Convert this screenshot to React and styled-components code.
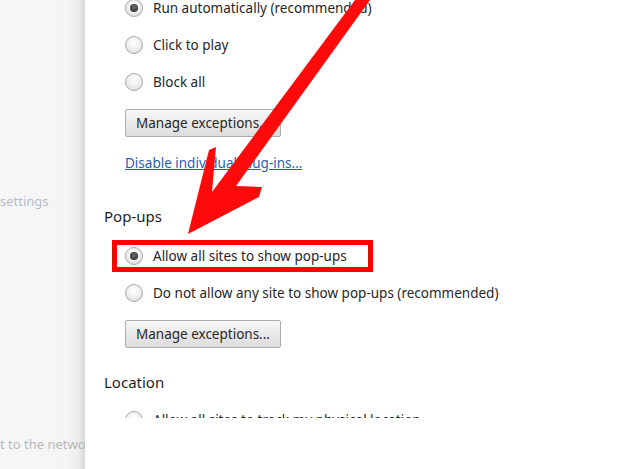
import React from "react";
import styled, { createGlobalStyle } from "styled-components";

const Global = createGlobalStyle`
  html, body { margin: 0; padding: 0; background: #ffffff; }
  body { font-family: "Noto Sans", "Open Sans", sans-serif; }
`;

const Page = styled.div`
  position: relative;
  width: 637px;
  height: 469px;
  display: flex;
  overflow: hidden;
  background: #fff;
`;

const Sidebar = styled.aside`
  width: 85px;
  flex: none;
  overflow: hidden;
  background: linear-gradient(to right, #f7f7f7 0px, #f5f5f5 68px, #ececec 78px, #dcdcdc 84px, #d4d4d4 85px);
  display: flex;
  flex-direction: column;
  padding-top: 192px;
  box-sizing: border-box;
`;

const SideItem = styled.div`
  white-space: nowrap;
  font-size: 13px;
  line-height: 18px;
  color: ${(p) => p.$color};
  margin-top: ${(p) => p.$mt}px;
  opacity: 0.9;
`;

const Main = styled.main`
  flex: 1;
  background: #fff;
`;

const Clip = styled.div`
  height: 418px;
  overflow: hidden;
  padding-left: 19px;
  display: flex;
  flex-direction: column;
`;

const Section = styled.section`
  display: flex;
  flex-direction: column;
  margin-top: ${(p) => p.$mt}px;
`;

const Heading = styled.h3`
  margin: 0 0 ${(p) => p.$mb}px 0;
  font-weight: 400;
  font-size: 15px;
  line-height: 20px;
  height: 20px;
  color: #1e1e1e;
`;

const Options = styled.div`
  display: flex;
  flex-direction: column;
  align-items: flex-start;
  gap: 17px;
  padding-left: 21px;
`;

const Row = styled.label`
  display: flex;
  align-items: center;
  gap: 10px;
  height: 20px;
  font-size: 13.5px;
  color: #262626;
  white-space: nowrap;
`;

const Radio = styled.span`
  width: 16px;
  height: 16px;
  flex: none;
  border-radius: 50%;
  border: 1px solid #a9a9a9;
  background: radial-gradient(circle at 50% 35%, #ffffff 0%, #f0f0f0 45%, #d6d6d6 100%);
  display: flex;
  align-items: center;
  justify-content: center;
  &::after {
    content: "";
    display: ${(p) => (p.$checked ? "block" : "none")};
    width: 8px;
    height: 8px;
    border-radius: 50%;
    background: radial-gradient(circle at 50% 40%, #6a6a6a 0%, #3a3a3a 70%, #2a2a2a 100%);
  }
`;

const Button = styled.button`
  width: 156px;
  height: 28px;
  border: 1px solid #acacac;
  border-radius: 2px;
  background: linear-gradient(#f8f8f8, #e9e9e9 50%, #dddddd);
  font-family: inherit;
  font-size: 13.5px;
  color: #262626;
  padding: 0;
`;

const Link = styled.a`
  font-size: 13.5px;
  line-height: 18px;
  color: #2a5db8;
  text-decoration: underline;
  white-space: nowrap;
`;

const Highlight = styled.div`
  position: absolute;
  left: 112px;
  top: 240px;
  width: 261px;
  height: 32px;
  box-sizing: border-box;
  border: 5px solid #ff0000;
  pointer-events: none;
`;

const Arrow = styled.svg`
  position: absolute;
  left: 0;
  top: 0;
  pointer-events: none;
`;

export default function App() {
  return (
    <>
      <Global />
      <Page>
        <Sidebar>
          <SideItem $color="#aeb7c6" $mt={0}>settings</SideItem>
          <SideItem $color="#b3b3b3" $mt={225}>t to the network</SideItem>
        </Sidebar>
        <Main>
          <Clip>
            <Section $mt={-2}>
              <Options>
                <Row><Radio $checked />Run automatically (recommended)</Row>
                <Row><Radio />Click to play</Row>
                <Row><Radio />Block all</Row>
                <Button>Manage exceptions...</Button>
                <Link>Disable individual plug-ins...</Link>
              </Options>
            </Section>
            <Section $mt={34}>
              <Heading $mb={20}>Pop-ups</Heading>
              <Options>
                <Row><Radio $checked />Allow all sites to show pop-ups</Row>
                <Row><Radio />Do not allow any site to show pop-ups (recommended)</Row>
                <Button>Manage exceptions...</Button>
              </Options>
            </Section>
            <Section $mt={24}>
              <Heading $mb={18}>Location</Heading>
              <Options>
                <Row><Radio />Allow all sites to track my physical location</Row>
              </Options>
            </Section>
          </Clip>
        </Main>
        <Highlight />
        <Arrow width="637" height="469" viewBox="0 0 637 469">
          <polygon
            fill="#ff0a0a"
            points="188,234 209,150 216,147 212,192 355,0 370,0 236,186 262,187 259,197"
          />
        </Arrow>
      </Page>
    </>
  );
}
